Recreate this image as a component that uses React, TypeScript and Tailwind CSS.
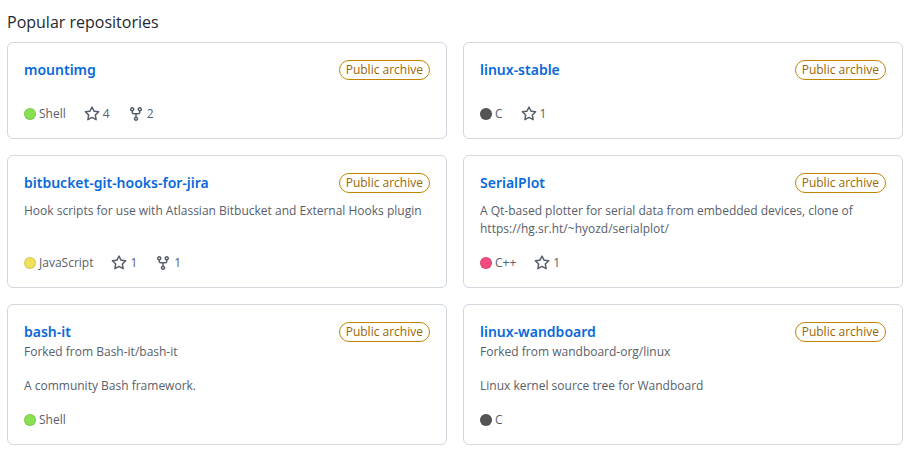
type Repo = {
  name: string;
  forkedFrom?: string;
  description?: string;
  language: string;
  color: string;
  stars?: number;
  forks?: number;
};

const repos: Repo[] = [
  { name: 'mountimg', language: 'Shell', color: 'bg-[#89e051]', stars: 4, forks: 2 },
  { name: 'linux-stable', language: 'C', color: 'bg-[#555555]', stars: 1 },
  {
    name: 'bitbucket-git-hooks-for-jira',
    description: 'Hook scripts for use with Atlassian Bitbucket and External Hooks plugin',
    language: 'JavaScript',
    color: 'bg-[#f1e05a]',
    stars: 1,
    forks: 1,
  },
  {
    name: 'SerialPlot',
    description:
      'A Qt-based plotter for serial data from embedded devices, clone of https://hg.sr.ht/~hyozd/serialplot/',
    language: 'C++',
    color: 'bg-[#f34b7d]',
    stars: 1,
  },
  {
    name: 'bash-it',
    forkedFrom: 'Bash-it/bash-it',
    description: 'A community Bash framework.',
    language: 'Shell',
    color: 'bg-[#89e051]',
  },
  {
    name: 'linux-wandboard',
    forkedFrom: 'wandboard-org/linux',
    description: 'Linux kernel source tree for Wandboard',
    language: 'C',
    color: 'bg-[#555555]',
  },
];

function StarIcon() {
  return (
    <svg viewBox="0 0 16 16" className="size-4" fill="currentColor" aria-hidden="true">
      <path
        fillRule="evenodd"
        d="M8 .25a.75.75 0 01.673.418l1.882 3.815 4.21.612a.75.75 0 01.416 1.279l-3.046 2.97.719 4.192a.75.75 0 01-1.088.791L8 12.347l-3.766 1.98a.75.75 0 01-1.088-.79l.72-4.194L.818 6.374a.75.75 0 01.416-1.28l4.21-.611L7.327.668A.75.75 0 018 .25zm0 2.445L6.615 5.5a.75.75 0 01-.564.41l-3.097.45 2.24 2.184a.75.75 0 01.216.664l-.528 3.084 2.769-1.456a.75.75 0 01.698 0l2.77 1.456-.53-3.084a.75.75 0 01.216-.664l2.24-2.183-3.096-.45a.75.75 0 01-.564-.41L8 2.694z"
      />
    </svg>
  );
}

function ForkIcon() {
  return (
    <svg viewBox="0 0 16 16" className="size-4" fill="currentColor" aria-hidden="true">
      <path
        fillRule="evenodd"
        d="M5 3.25a.75.75 0 11-1.5 0 .75.75 0 011.5 0zm0 2.122a2.25 2.25 0 10-1.5 0v.878A2.25 2.25 0 005.75 8.5h1.5v2.128a2.251 2.251 0 101.5 0V8.5h1.5a2.25 2.25 0 002.25-2.25v-.878a2.25 2.25 0 10-1.5 0v.878a.75.75 0 01-.75.75h-4.5A.75.75 0 015 6.25v-.878zm3.75 7.378a.75.75 0 11-1.5 0 .75.75 0 011.5 0zm3-8.75a.75.75 0 100-1.5.75.75 0 000 1.5z"
      />
    </svg>
  );
}

function RepoCard({ repo }: { repo: Repo }) {
  return (
    <li className="flex flex-col rounded-md border border-[#d0d7de] px-4 pt-4 pb-[15px]">
      <div className="mb-px flex items-center justify-between">
        <a
          href="#"
          className="font-['Noto_Sans',sans-serif] text-sm leading-[21px] font-semibold text-[#0969da]"
        >
          {repo.name}
        </a>
        <span className="rounded-full border border-[#bf8700] px-[6px] text-xs leading-[18px] text-[#9a6700]">
          Public archive
        </span>
      </div>
      {repo.forkedFrom && (
        <p className="text-xs leading-[18px]">
          Forked from <a href="#">{repo.forkedFrom}</a>
        </p>
      )}
      <p
        className={
          repo.forkedFrom
            ? 'mt-4 mb-4 grow text-xs leading-[18px]'
            : 'mt-2 mb-4 grow text-xs leading-[18px]'
        }
      >
        {repo.description}
      </p>
      <div className="flex items-center text-xs leading-[18px]">
        <span className="flex items-center gap-[3px]">
          <span className={`size-3 rounded-full border border-black/10 ${repo.color}`} />
          {repo.language}
        </span>
        {repo.stars && (
          <a href="#" className="ml-[18px] flex items-center gap-[3px]">
            <StarIcon />
            {repo.stars}
          </a>
        )}
        {repo.forks && (
          <a href="#" className="ml-[18px] flex items-center gap-[3px]">
            <ForkIcon />
            {repo.forks}
          </a>
        )}
      </div>
    </li>
  );
}

export default function App() {
  return (
    <main className="bg-white pt-[10px] pr-[6px] pb-2 pl-[7px] font-['Open_Sans',sans-serif] text-[#57606a]">
      <h2 className="mb-2 text-base leading-6 text-[#24292f]">Popular repositories</h2>
      <ul className="grid grid-cols-2 gap-4">
        {repos.map((repo) => (
          <RepoCard key={repo.name} repo={repo} />
        ))}
      </ul>
    </main>
  );
}
